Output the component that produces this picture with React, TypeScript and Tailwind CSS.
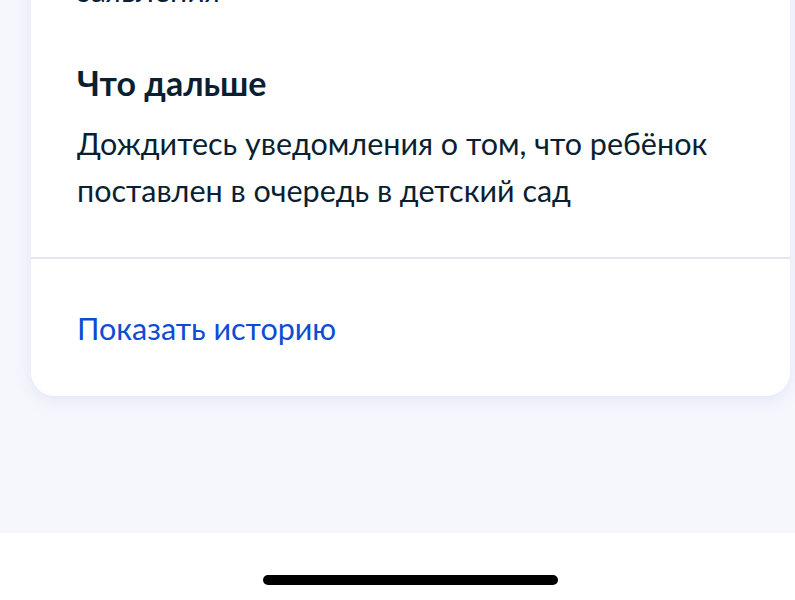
export default function App() {
  return (
    <div className="flex h-[600px] w-[795px] flex-col overflow-hidden bg-white font-['Lato',sans-serif] text-[#0b1f33]">
      <div className="h-[533px] bg-[#f6f7fd] pl-[31px] pr-[5px]">
        <div className="-mt-[33px] rounded-b-[24px] bg-white shadow-[0_4px_18px_rgba(107,122,190,0.14)]">
          <div className="px-[46px] pb-[43px]">
            <p className="text-[30.5px] leading-[47px]">заявления</p>
            <h2 className="mt-[49px] text-[34px] font-bold leading-[40px]">Что дальше</h2>
            <p className="mt-[17px] text-[30.5px] leading-[47px]">
              Дождитесь уведомления о том, что ребёнок
              <br />
              поставлен в очередь в детский сад
            </p>
          </div>
          <div className="h-[2px] bg-[#e4e7ee]" />
          <div className="px-[46px] pt-[49px] pb-[48px]">
            <a className="text-[30.5px] leading-[40px] text-[#0d4cd3]">Показать историю</a>
          </div>
        </div>
      </div>
      <div className="flex flex-1 pl-[263px] pt-[42px]">
        <div className="h-[10px] w-[295px] rounded-full bg-black" />
      </div>
    </div>
  );
}
